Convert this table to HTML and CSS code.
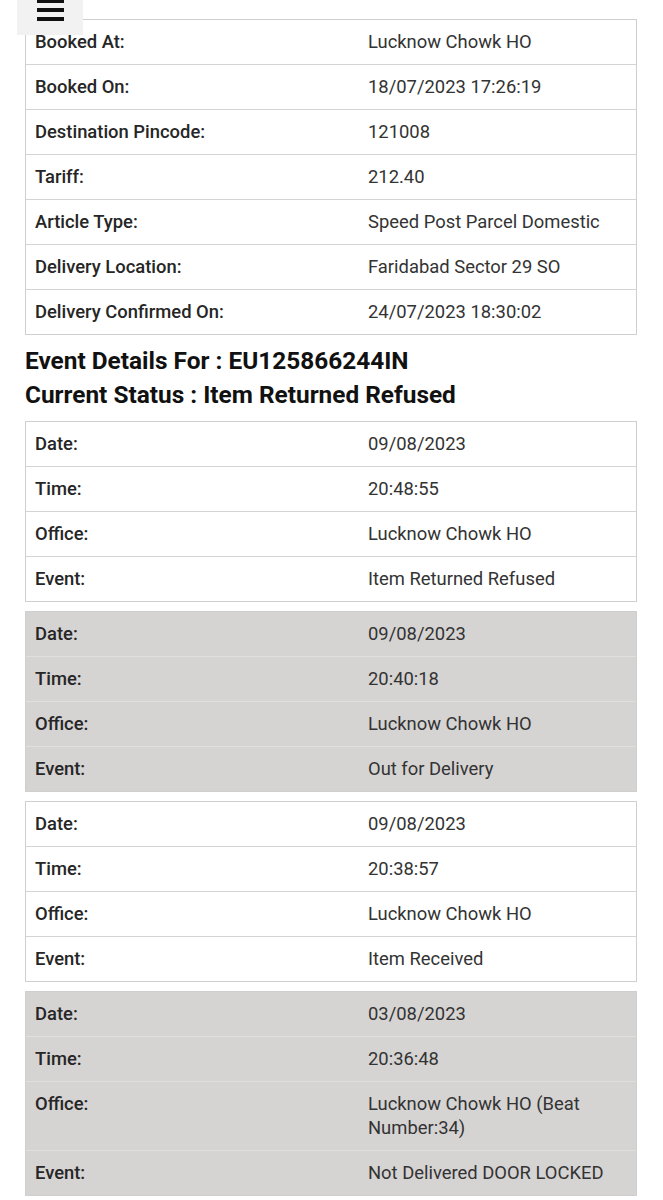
FILE: index.html
```html
<!DOCTYPE html>
<html lang="en">
<head>
    <meta charset="UTF-8">
    <meta name="viewport" content="width=device-width, initial-scale=1.0">
    <title>Track Consignment</title>
    <link rel="stylesheet" href="styles.css">
</head>
<body>
    <button class="menu-btn" aria-label="Menu">
        <span></span><span></span><span></span>
    </button>

    <div class="page">
        <div class="info-table">
            <div class="row"><div class="label">Booked At:</div><div class="value">Lucknow Chowk HO</div></div>
            <div class="row"><div class="label">Booked On:</div><div class="value">18/07/2023 17:26:19</div></div>
            <div class="row"><div class="label">Destination Pincode:</div><div class="value">121008</div></div>
            <div class="row"><div class="label">Tariff:</div><div class="value">212.40</div></div>
            <div class="row"><div class="label">Article Type:</div><div class="value">Speed Post Parcel Domestic</div></div>
            <div class="row"><div class="label">Delivery Location:</div><div class="value">Faridabad Sector 29 SO</div></div>
            <div class="row"><div class="label">Delivery Confirmed On:</div><div class="value">24/07/2023 18:30:02</div></div>
        </div>

        <h2 class="heading">Event Details For : EU125866244IN</h2>
        <h2 class="heading">Current Status : Item Returned Refused</h2>

        <!-- eventos, alternando blanco y gris -->
        <div class="info-table">
            <div class="row"><div class="label">Date:</div><div class="value">09/08/2023</div></div>
            <div class="row"><div class="label">Time:</div><div class="value">20:48:55</div></div>
            <div class="row"><div class="label">Office:</div><div class="value">Lucknow Chowk HO</div></div>
            <div class="row"><div class="label">Event:</div><div class="value">Item Returned Refused</div></div>
        </div>

        <div class="info-table grey">
            <div class="row"><div class="label">Date:</div><div class="value">09/08/2023</div></div>
            <div class="row"><div class="label">Time:</div><div class="value">20:40:18</div></div>
            <div class="row"><div class="label">Office:</div><div class="value">Lucknow Chowk HO</div></div>
            <div class="row"><div class="label">Event:</div><div class="value">Out for Delivery</div></div>
        </div>

        <div class="info-table">
            <div class="row"><div class="label">Date:</div><div class="value">09/08/2023</div></div>
            <div class="row"><div class="label">Time:</div><div class="value">20:38:57</div></div>
            <div class="row"><div class="label">Office:</div><div class="value">Lucknow Chowk HO</div></div>
            <div class="row"><div class="label">Event:</div><div class="value">Item Received</div></div>
        </div>

        <div class="info-table grey">
            <div class="row"><div class="label">Date:</div><div class="value">03/08/2023</div></div>
            <div class="row"><div class="label">Time:</div><div class="value">20:36:48</div></div>
            <div class="row"><div class="label">Office:</div><div class="value">Lucknow Chowk HO (Beat Number:34)</div></div>
            <div class="row"><div class="label">Event:</div><div class="value">Not Delivered DOOR LOCKED</div></div>
        </div>
    </div>
</body>
</html>
```

FILE: styles.css
```css
body {
    margin: 0;
    font-family: Roboto, "Liberation Sans", Arial, sans-serif;
    color: #333;
    background-color: #fff;
}
.page {
    padding: 19px 26px 0 25px;
}
.menu-btn {
    position: fixed;
    top: 0;
    left: 17px;
    width: 66px;
    height: 35px;
    padding: 0;
    border: none;
    background-color: #f2f2f2;
    display: flex;
    flex-direction: column;
    align-items: center;
    gap: 5px;
    cursor: pointer;
}
.menu-btn span {
    display: block;
    width: 27px;
    height: 4px;
    background-color: #111;
}
.menu-btn span:first-child {
    margin-top: -1px;
}
.info-table {
    border: 1px solid #cfcfcf;
    background-color: #fff;
    margin-bottom: 9px;
}
.info-table.grey {
    background-color: #d6d3d3;
}
.row {
    display: grid;
    grid-template-columns: 333px 1fr;
    border-top: 1px solid #d4d4d4;
}
.row:first-child {
    border-top: none;
}
.grey .row {
    border-top-color: #e0dede;
}
.label,
.value {
    padding: 10px 9px;
    font-size: 18.4px;
    line-height: 24px;
}
.label {
    font-weight: 500;
    color: #262626;
}
.value {
    padding-right: 20px;
}
.heading {
    margin: 0;
    font-size: 24.4px;
    line-height: 34px;
    font-weight: 700;
    color: #111;
}
.info-table + .heading {
    margin-top: 9px;
}
.heading + .info-table {
    margin-top: 9px;
}
```
